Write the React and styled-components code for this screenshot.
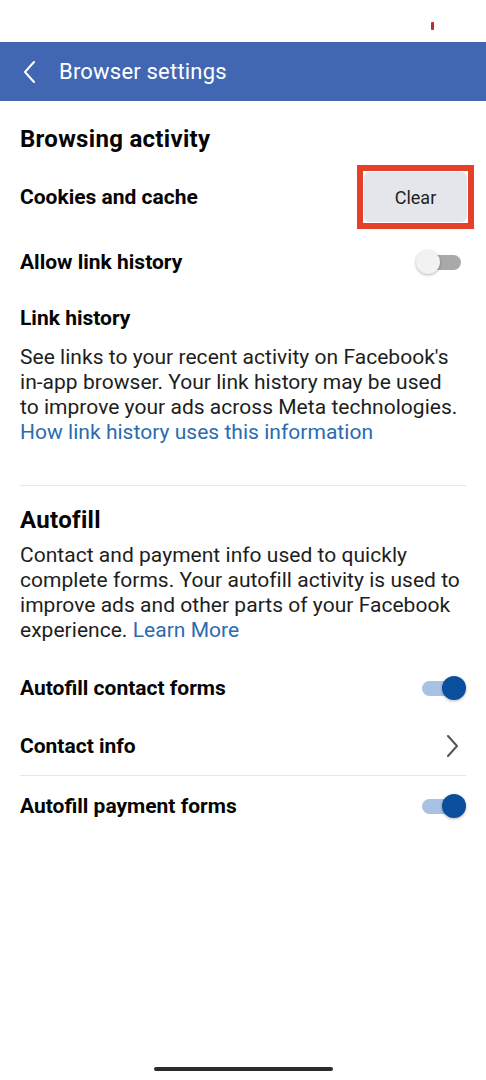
import React from "react";
import styled, { createGlobalStyle } from "styled-components";

const GlobalStyle = createGlobalStyle`
  html, body {
    margin: 0;
    padding: 0;
    background: #fff;
  }
  body {
    font-family: Roboto, "Noto Sans", "Liberation Sans", sans-serif;
    color: #050505;
  }
`;

const Page = styled.div`
  width: 486px;
  height: 1080px;
  display: flex;
  flex-direction: column;
  overflow: hidden;
  background: #fff;
`;

const StatusBar = styled.div`
  height: 42px;
  display: flex;
  justify-content: flex-end;
  align-items: flex-start;
  padding-right: 52px;
  box-sizing: border-box;

  span {
    margin-top: 22px;
    width: 3px;
    height: 8px;
    border-radius: 1px;
    background: #c12a30;
  }
`;

const Header = styled.div`
  height: 59px;
  background: #4267b2;
  display: flex;
  align-items: center;
  padding-left: 22px;
  gap: 22px;
  color: #fff;

  h1 {
    margin: 0;
    font-size: 22px;
    font-weight: 400;
    letter-spacing: 0.2px;
  }
`;

const Content = styled.div`
  padding: 23px 20px 0;
  display: flex;
  flex-direction: column;
`;

const SectionTitle = styled.h2`
  margin: ${(p) => p.$mt || 0}px 0 0;
  height: 30px;
  line-height: 30px;
  font-size: 24px;
  font-weight: 700;
  letter-spacing: 0.3px;
`;

const Row = styled.div`
  height: ${(p) => p.$h}px;
  display: flex;
  align-items: center;
  justify-content: space-between;
  font-size: 21px;
  font-weight: 700;
`;

const SubTitle = styled.div`
  height: 28px;
  line-height: 28px;
  margin-top: 20px;
  font-size: 21px;
  font-weight: 700;
`;

const Para = styled.p`
  margin: ${(p) => p.$mt}px -20px 0 0;
  font-size: 21px;
  line-height: 25px;
  letter-spacing: 0.03px;
  color: #1c1e21;

  span {
    display: block;
    white-space: nowrap;
  }

  a {
    color: #2a6bb1;
    text-decoration: none;
  }
`;

const Divider = styled.div`
  height: 1px;
  background: #e6e7ea;
  margin-top: ${(p) => p.$mt || 0}px;
`;

const Highlight = styled.div`
  border: 6px solid #e5402a;
  padding: 1px;
  margin-right: -8px;
`;

const ClearButton = styled.button`
  width: 103px;
  height: 50px;
  border: none;
  border-radius: 6px;
  background: #e4e6eb;
  font-family: inherit;
  font-size: 18px;
  color: #1c1e21;
  padding: 0;
`;

const Toggle = styled.div`
  position: relative;
  width: 42px;
  height: 15px;
  border-radius: 8px;
  background: ${(p) => (p.$on ? "#a9c1e3" : "#a9a9a9")};
  margin-right: ${(p) => (p.$on ? 2 : 5)}px;

  &::after {
    content: "";
    position: absolute;
    top: -5px;
    ${(p) => (p.$on ? "right: -2px;" : "left: -3px;")}
    width: 24px;
    height: 24px;
    border-radius: 50%;
    background: ${(p) => (p.$on ? "#0a4e9e" : "#f2f2f2")};
    box-shadow: 0 1px 3px rgba(0, 0, 0, 0.3);
  }
`;

const ChevronBox = styled.div`
  display: flex;
  margin-right: ${(p) => p.$mr || 0}px;
`;

const HomeBar = styled.div`
  margin: auto auto 9px;
  width: 179px;
  height: 4px;
  border-radius: 2px;
  background: #2b2b2b;
`;

function Chevron({ dir = "right", color, mr }) {
  const d = dir === "left" ? "M12 1 L3 11 L12 21" : "M3 1 L12 11 L3 21";
  return (
    <ChevronBox $mr={mr}>
      <svg width={15} height={22} viewBox="0 0 15 22" fill="none">
        <path d={d} stroke={color} strokeWidth="2" strokeLinecap="round" strokeLinejoin="round" />
      </svg>
    </ChevronBox>
  );
}

export default function App() {
  return (
    <Page>
      <GlobalStyle />
      <StatusBar>
        <span />
      </StatusBar>
      <Header>
        <Chevron dir="left" color="#fff" />
        <h1>Browser settings</h1>
      </Header>
      <Content>
        <SectionTitle>Browsing activity</SectionTitle>
        <Row $h={86}>
          Cookies and cache
          <Highlight>
            <ClearButton>Clear</ClearButton>
          </Highlight>
        </Row>
        <Row $h={44}>
          Allow link history
          <Toggle />
        </Row>
        <SubTitle>Link history</SubTitle>
        <Para $mt={13}>
          <span>See links to your recent activity on Facebook's</span>
          <span>in-app browser. Your link history may be used</span>
          <span>to improve your ads across Meta technologies.</span>
          <span>
            <a href="#">How link history uses this information</a>
          </span>
        </Para>
        <Divider $mt={40} />
        <SectionTitle $mt={19}>Autofill</SectionTitle>
        <Para $mt={8}>
          <span>Contact and payment info used to quickly</span>
          <span>complete forms. Your autofill activity is used to</span>
          <span>improve ads and other parts of your Facebook</span>
          <span>
            experience. <a href="#">Learn More</a>
          </span>
        </Para>
        <Row $h={58} style={{ marginTop: 16 }}>
          Autofill contact forms
          <Toggle $on />
        </Row>
        <Row $h={58}>
          Contact info
          <Chevron color="#555" mr={6} />
        </Row>
        <Divider />
        <Row $h={60}>
          Autofill payment forms
          <Toggle $on />
        </Row>
      </Content>
      <HomeBar />
    </Page>
  );
}
